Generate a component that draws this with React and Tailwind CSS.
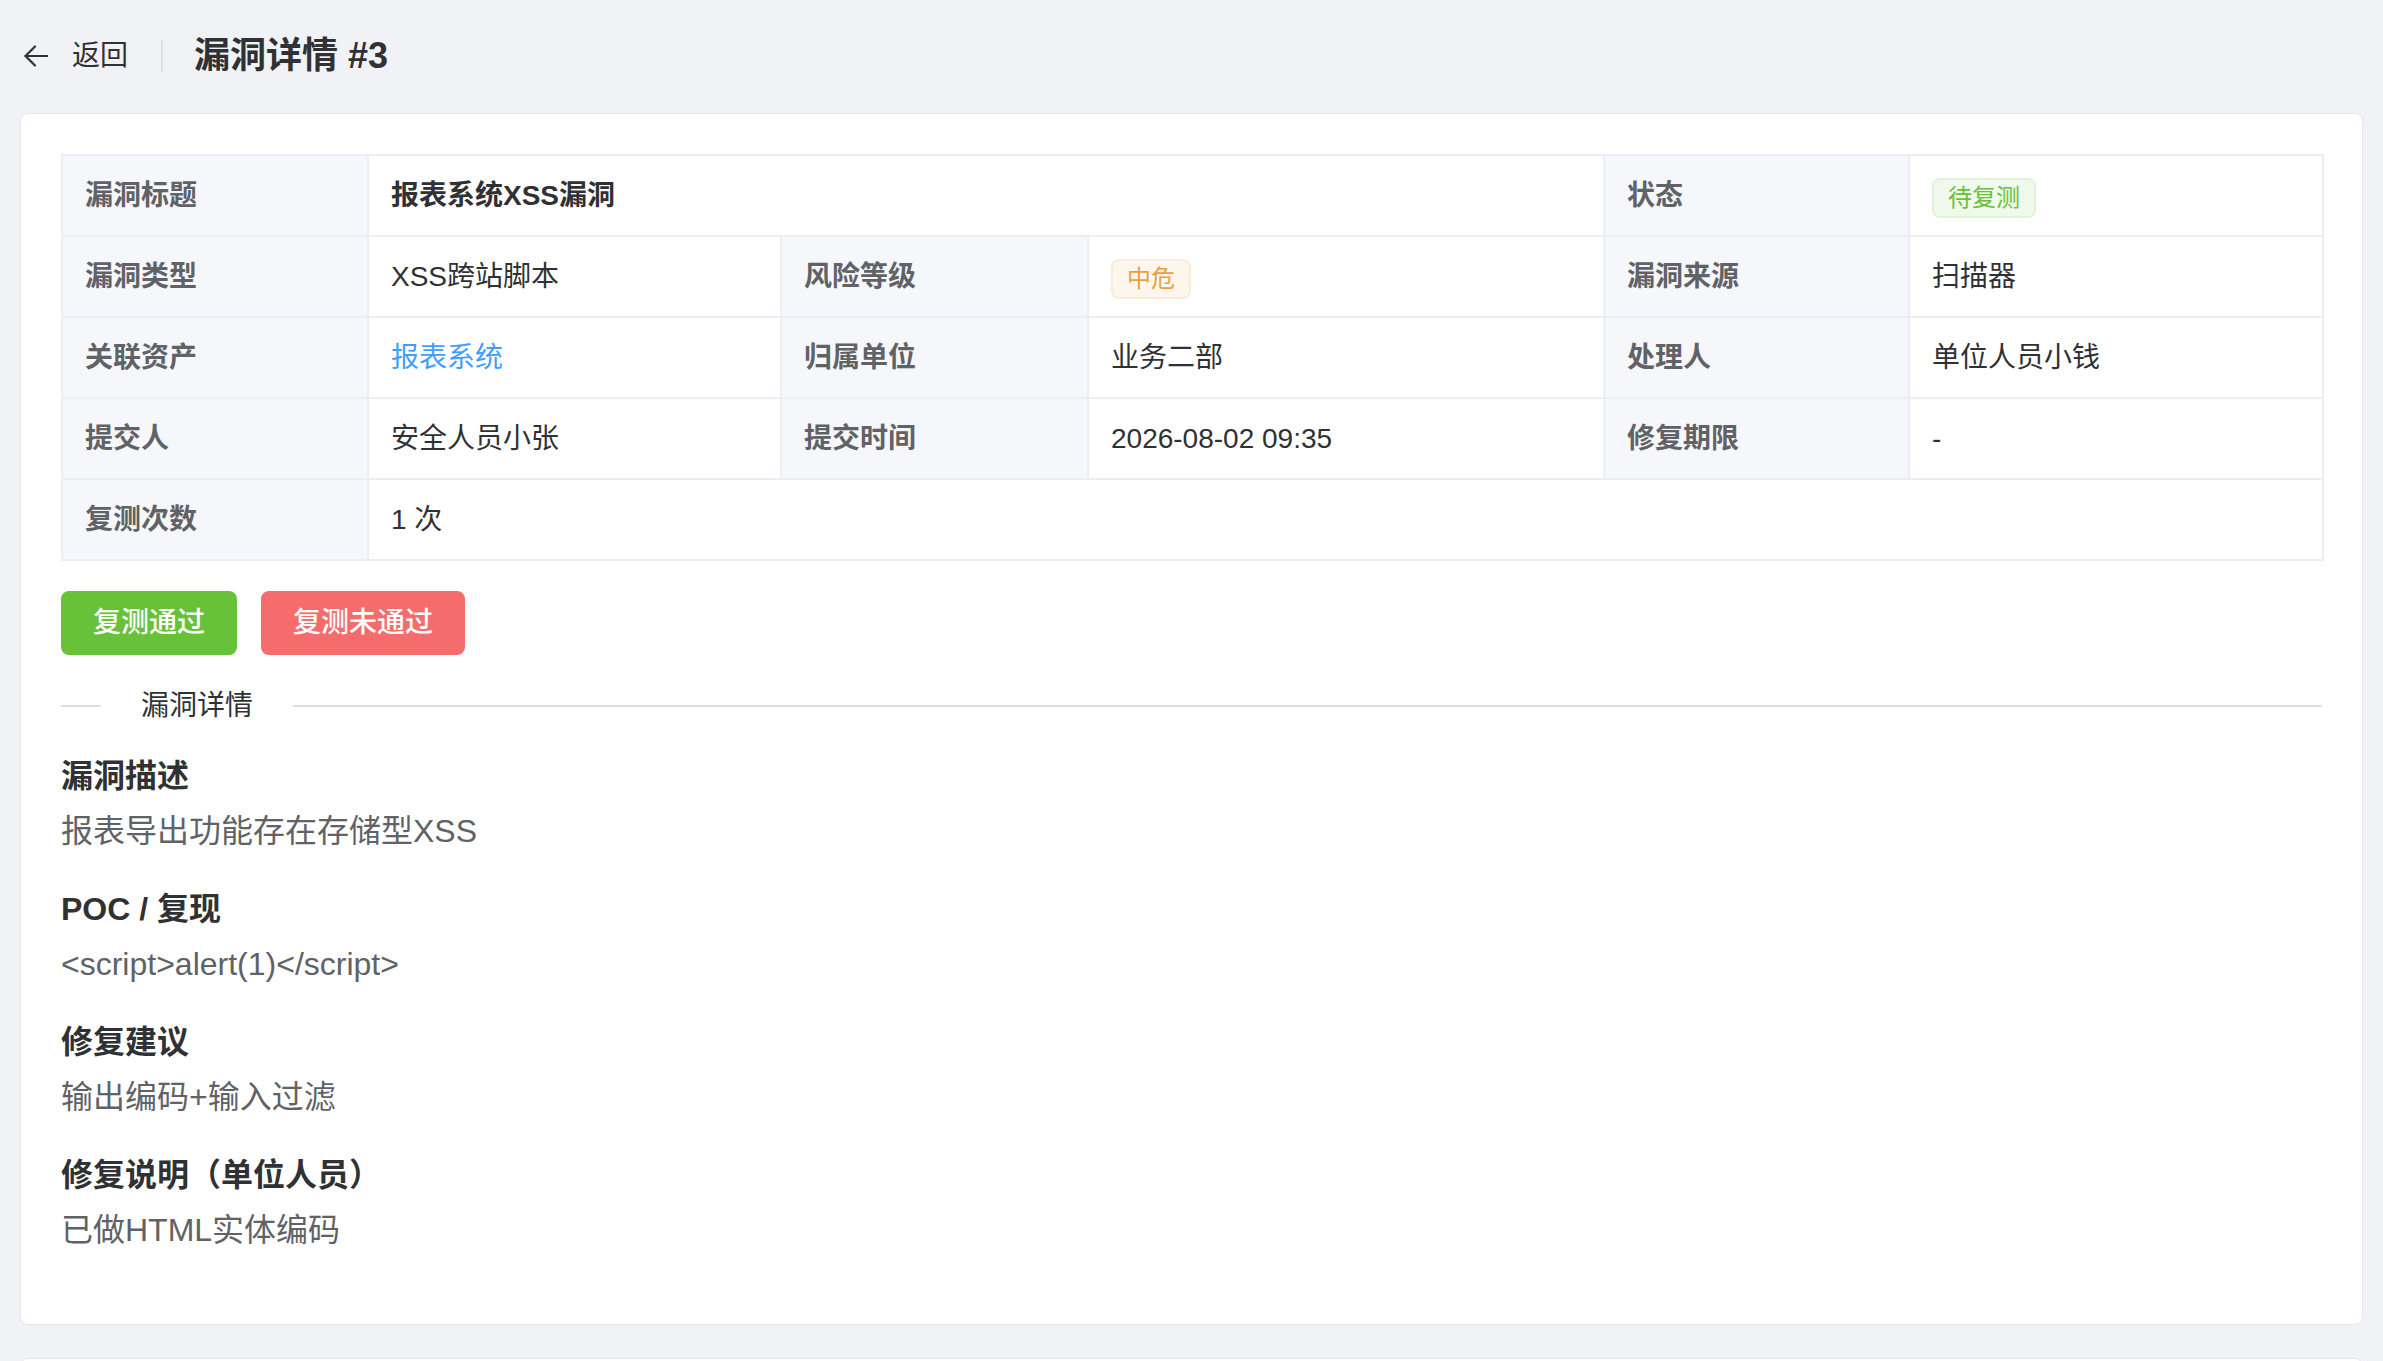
import React from "react"

const font = { fontFamily: '"Liberation Sans", "Noto Sans CJK SC", sans-serif' }

// ─── Tag ───

const Tag = ({ tone, children }) => {
    const tones = {
        success: "bg-[#f0f9eb] border-[#e1f3d8] text-[#67c23a]",
        warning: "bg-[#fdf6ec] border-[#faecd8] text-[#e6a23c]",
    }
    return (
        <span className={`inline-block align-middle h-[40px] leading-[36px] px-[14px] border-2 rounded-[8px] text-[24px] ${tones[tone]}`}>
            {children}
        </span>
    )
}

// ─── Cells ───

const Label = ({ children }) => (
    <th className="bg-[#f5f7fa] border-2 border-[#ebeef5] px-[22px] py-[16px] leading-[47px] text-left font-bold text-[#606266] align-middle">
        {children}
    </th>
)

const Cell = ({ children, colSpan, className = "" }) => (
    <td
        colSpan={colSpan}
        className={`border-2 border-[#ebeef5] px-[22px] py-[16px] leading-[47px] text-[#303133] align-middle ${className}`}
    >
        {children}
    </td>
)

// ─── Section ───

const Section = ({ title, text }) => (
    <div>
        <h4 className="text-[32px] leading-[44px] font-bold text-[#303133]">{title}</h4>
        <p className="mt-[11px] text-[32px] leading-[44px] text-[#606266]">{text}</p>
    </div>
)

const BackArrow = () => (
    <svg width="24" height="22" viewBox="0 0 24 22" fill="none" stroke="currentColor" strokeWidth="2.2" strokeLinecap="round" strokeLinejoin="round">
        <path d="M23.5 11H1.5" />
        <path d="M11 1.5L1.5 11l9.5 9.5" />
    </svg>
)

export default function App() {
    return (
        <div className="min-h-screen bg-[#f0f2f5] px-[20px] pt-[20px]" style={font}>
            {/* Page header */}
            <div className="h-[72px] mb-[21px] flex items-center pl-[4px] text-[#303133]">
                <BackArrow />
                <span className="ml-[24px] text-[28px]">返回</span>
                <div className="ml-[33px] mr-[31px] w-[2px] h-[32px] bg-[#dcdfe6]" />
                <h1 className="text-[36px] font-bold">漏洞详情 #3</h1>
            </div>

            {/* Detail card */}
            <div className="bg-white border border-[#e4e7ed] rounded-[8px] px-[40px] pt-[40px] pb-[72px]">
                <table className="w-full table-fixed border-collapse text-[28px]">
                    <colgroup>
                        <col className="w-[306px]" />
                        <col className="w-[413px]" />
                        <col className="w-[307px]" />
                        <col className="w-[516px]" />
                        <col className="w-[305px]" />
                        <col className="w-[414px]" />
                    </colgroup>
                    <tbody>
                        <tr>
                            <Label>漏洞标题</Label>
                            <Cell colSpan={3} className="font-bold">报表系统XSS漏洞</Cell>
                            <Label>状态</Label>
                            <Cell><Tag tone="success">待复测</Tag></Cell>
                        </tr>
                        <tr>
                            <Label>漏洞类型</Label>
                            <Cell>XSS跨站脚本</Cell>
                            <Label>风险等级</Label>
                            <Cell><Tag tone="warning">中危</Tag></Cell>
                            <Label>漏洞来源</Label>
                            <Cell>扫描器</Cell>
                        </tr>
                        <tr>
                            <Label>关联资产</Label>
                            <Cell><span className="text-[#409eff]">报表系统</span></Cell>
                            <Label>归属单位</Label>
                            <Cell>业务二部</Cell>
                            <Label>处理人</Label>
                            <Cell>单位人员小钱</Cell>
                        </tr>
                        <tr>
                            <Label>提交人</Label>
                            <Cell>安全人员小张</Cell>
                            <Label>提交时间</Label>
                            <Cell>2026-08-02 09:35</Cell>
                            <Label>修复期限</Label>
                            <Cell>-</Cell>
                        </tr>
                        <tr>
                            <Label>复测次数</Label>
                            <Cell colSpan={5}>1 次</Cell>
                        </tr>
                    </tbody>
                </table>

                {/* Actions */}
                <div className="mt-[30px] flex gap-[24px]">
                    <button className="h-[64px] px-[30px] rounded-[8px] border-2 border-[#67c23a] bg-[#67c23a] text-white text-[28px] font-medium">
                        复测通过
                    </button>
                    <button className="h-[64px] px-[30px] rounded-[8px] border-2 border-[#f56c6c] bg-[#f56c6c] text-white text-[28px] font-medium">
                        复测未通过
                    </button>
                </div>

                {/* Divider */}
                <div className="mt-[35px] flex items-center">
                    <div className="w-[40px] h-[2px] bg-[#dcdfe6]" />
                    <span className="px-[40px] text-[28px] leading-[32px] text-[#303133]">漏洞详情</span>
                    <div className="flex-1 h-[2px] bg-[#dcdfe6]" />
                </div>

                <div className="mt-[32px] flex flex-col gap-[34px]">
                    <Section title="漏洞描述" text="报表导出功能存在存储型XSS" />
                    <Section title="POC / 复现" text="<script>alert(1)</script>" />
                    <Section title="修复建议" text="输出编码+输入过滤" />
                    <Section title="修复说明（单位人员）" text="已做HTML实体编码" />
                </div>
            </div>

            {/* Next card (partially visible) */}
            <div className="mt-[33px] h-[400px] bg-white border border-[#e4e7ed] rounded-[8px]" />
        </div>
    )
}
